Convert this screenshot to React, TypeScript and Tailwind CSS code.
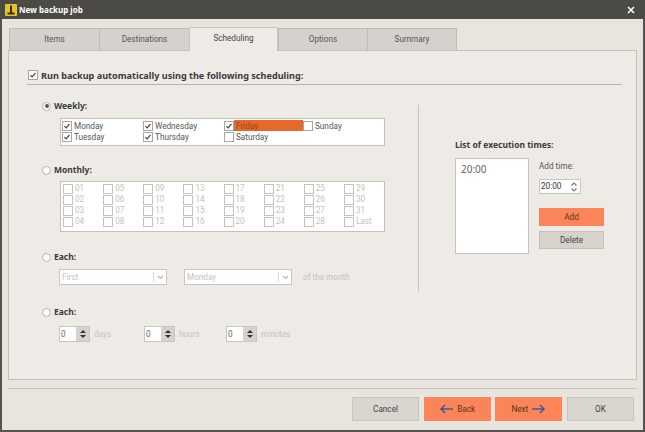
import React from "react";

const font = { fontFamily: 'Roboto, "Noto Sans", sans-serif' };

function Check({ on, off }: { on?: boolean; off?: boolean }) {
  return (
    <span className={`flex h-[10px] w-[10px] shrink-0 items-center justify-center border ${off ? "border-[#c4c2bc]" : "border-[#a8a6a0]"} bg-white`}>
      {on && (
        <svg width="8" height="8" viewBox="0 0 8 8">
          <path d="M1.4 4.2 L3.2 5.9 L6.4 2" fill="none" stroke="#4a4a4a" strokeWidth="1.2" />
        </svg>
      )}
    </span>
  );
}

function Radio({ on, label }: { on?: boolean; label: string }) {
  return (
    <div className="flex h-[12px] items-center gap-[3px]">
      <span className="flex h-[9px] w-[9px] items-center justify-center rounded-full border border-[#b4b2ac] bg-white">
        {on && <span className="h-[4px] w-[4px] rounded-full bg-[#555]" />}
      </span>
      <span className="font-['Noto_Sans'] text-[8.5px] font-bold leading-none text-[#3a3a3a]">{label}</span>
    </div>
  );
}

function Day({ name, on, hi }: { name: string; on?: boolean; hi?: boolean }) {
  return (
    <div className="flex h-[11px] items-center">
      <Check on={on} />
      <span className={`flex h-[11px] flex-1 items-center pl-[2px] pt-[1px] text-[8.2px] leading-none ${hi ? "bg-[#e8672a] text-[#9a4520]" : "text-[#555]"}`}>{name}</span>
    </div>
  );
}

function Spin({ label }: { label: string }) {
  return (
    <div className="flex items-center">
      <div className="flex h-[16px] w-[31px] items-center border border-[#c8c6c0] bg-white pl-[1px]">
        <span className="flex-1 text-[8.2px] leading-none text-[#666]">0</span>
        <span className="flex h-[14px] w-[13px] flex-col items-center justify-center gap-[2px] bg-[#d6d3cd]">
          <span className="h-0 w-0 border-x-[3px] border-b-[3px] border-x-transparent border-b-[#333]" />
          <span className="h-0 w-0 border-x-[3px] border-t-[3px] border-x-transparent border-t-[#333]" />
        </span>
      </div>
      <span className="ml-[4px] text-[8.2px] leading-none text-[#c4c2bc]">{label}</span>
    </div>
  );
}

function Select({ label }: { label: string }) {
  return (
    <div className="flex h-[16px] w-[108px] items-center border border-[#c8c6c0] bg-white pl-[2px]">
      <span className="flex-1 text-[8.2px] leading-none text-[#c4c2bc]">{label}</span>
      <span className="flex h-[10px] w-[13px] items-center justify-center border-l border-[#dddbd6]">
        <svg width="7" height="5" viewBox="0 0 7 5">
          <path d="M1 1 L3.5 3.5 L6 1" fill="none" stroke="#b8b6b0" strokeWidth="1.2" />
        </svg>
      </span>
    </div>
  );
}

function Arrow({ dir }: { dir: "l" | "r" }) {
  return (
    <svg width="15" height="10" viewBox="0 0 15 10">
      {dir === "l" ? (
        <path d="M14 5 H2 M6 1 L2 5 L6 9" fill="none" stroke="#3f5a96" strokeWidth="1.5" />
      ) : (
        <path d="M1 5 H13 M9 1 L13 5 L9 9" fill="none" stroke="#3f5a96" strokeWidth="1.5" />
      )}
    </svg>
  );
}

const tabs = [
  { t: "Items", w: "w-[90px]" },
  { t: "Destinations", w: "w-[90px]" },
  { t: "Scheduling", w: "w-[89px]" },
  { t: "Options", w: "w-[89px]" },
  { t: "Summary", w: "w-[90px]" },
];
const days = ["01", "05", "09", "13", "17", "21", "25", "29", "02", "06", "10", "14", "18", "22", "26", "30", "03", "07", "11", "15", "19", "23", "27", "31", "04", "08", "12", "16", "20", "24", "28", "Last"];

export default function App() {
  return (
    <div style={font} className="flex h-[432px] w-[645px] flex-col overflow-hidden bg-[#e8e5df]">
      <div className="flex h-[19px] shrink-0 items-center justify-between bg-[#4c4a44] pl-[5px] pr-[10px]">
        <div className="flex items-center gap-[2px]">
          <span className="flex h-[12px] w-[12px] items-center justify-center rounded-[1px] bg-[#e6c422]">
            <svg width="10" height="10" viewBox="0 0 10 10">
              <path d="M5 0.5 V8 M1.5 8.5 H8.5" stroke="#3a2a08" strokeWidth="2" fill="none" />
            </svg>
          </span>
          <span className="font-['Noto_Sans'] text-[8px] font-bold leading-none text-white">New backup job</span>
        </div>
        <svg width="8" height="8" viewBox="0 0 8 8">
          <path d="M1 1 L7 7 M7 1 L1 7" stroke="#fff" strokeWidth="1.6" />
        </svg>
      </div>

      <div className="flex min-h-0 flex-1 flex-col border-x-2 border-b-2 border-[#55534d] px-[6px]">
        <div className="mt-[9px] flex h-[22px] shrink-0 items-end pl-[1px]">
          {tabs.map(({ t, w }) =>
            t === "Scheduling" ? (
              <div key={t} className={`relative z-10 -mb-px flex h-[24px] ${w} items-center justify-center border-x border-t border-[#c8c5bf] bg-[#eeebe6] pb-[3px] text-[8.2px] text-[#444]`}>
                {t}
              </div>
            ) : (
              <div key={t} className={`flex h-[22px] ${w} items-center justify-center border-l border-t border-[#bfbcb6] bg-[#d5d2cd] text-[8.2px] text-[#555] last:border-r`}>
                {t}
              </div>
            )
          )}
        </div>

        <div className="flex h-[330px] shrink-0 flex-col border border-[#c4c1bb] bg-[#eeebe6] pl-[18px] pr-[14px] pt-[19px]">
          <div className="flex h-[15px] items-start gap-[3px] border-b border-[#b8b5af] pl-[1px]">
            <Check on />
            <span className="font-['Noto_Sans'] text-[9.1px] font-bold leading-[11px] text-[#3a3a3a]">Run backup automatically using the following scheduling:</span>
          </div>

          <div className="flex flex-1">
            <div className="w-[391px] shrink-0 pl-[15px] pt-[15px]">
              <Radio on label="Weekly:" />
              <div className="ml-[18px] mt-[6px] grid h-[28px] w-[325px] grid-cols-[81px_81px_79px_80px] content-start border border-[#c4c1bb] bg-white pl-[1px] pt-[1px]">
                <Day name="Monday" on />
                <Day name="Wednesday" on />
                <Day name="Friday" on hi />
                <Day name="Sunday" />
                <Day name="Tuesday" on />
                <Day name="Thursday" on />
                <Day name="Saturday" />
              </div>

              <div className="mt-[18px]">
                <Radio label="Monthly:" />
              </div>
              <div className="ml-[18px] mt-[5px] grid h-[51px] w-[325px] grid-cols-8 content-start border border-[#c4c1bb] bg-white pl-[2px] pt-[1px]">
                {days.map((d) => (
                  <div key={d} className="flex h-[11px] items-center gap-[2px]">
                    <Check off />
                    <span className="text-[8.2px] leading-none text-[#c4c2bc]">{d}</span>
                  </div>
                ))}
              </div>

              <div className="mt-[19px]">
                <Radio label="Each:" />
              </div>
              <div className="ml-[17px] mt-[6px] flex items-center">
                <Select label="First" />
                <span className="ml-[17px]" />
                <Select label="Monday" />
                <span className="ml-[11px] text-[8.2px] leading-none text-[#c4c2bc]">of the month</span>
              </div>

              <div className="mt-[21px]">
                <Radio label="Each:" />
              </div>
              <div className="ml-[17px] mt-[8px] flex items-center">
                <div className="w-[85px]"><Spin label="days" /></div>
                <div className="w-[82px]"><Spin label="hours" /></div>
                <Spin label="minutes" />
              </div>
            </div>

            <div className="mt-[20px] h-[187px] w-px shrink-0 bg-[#c8c5bf]" />

            <div className="pl-[36px] pt-[54px]">
              <div className="font-['Noto_Sans'] text-[8.5px] font-bold leading-[11px] text-[#3a3a3a]">List of execution times:</div>
              <div className="mt-[8px] flex">
                <div className="h-[96px] w-[74px] border border-[#c8c5bf] bg-white pl-[5px] pt-[3px] font-['Noto_Sans'] text-[10px] leading-[14px] text-[#666]">20:00</div>
                <div className="ml-[10px] flex w-[65px] flex-col">
                  <div className="mt-[3px] text-[8.2px] leading-[11px] text-[#555]">Add time:</div>
                  <div className="mt-[7px] flex h-[15px] w-[42px] items-center border border-[#c8c5bf] bg-white pl-[1px] text-[8.2px] leading-none text-[#333]">
                    <span className="flex-1">20:00</span>
                    <svg width="10" height="12" viewBox="0 0 10 12" className="mr-[1px]">
                      <path d="M2.5 4.5 L5 2 L7.5 4.5 M2.5 7.5 L5 10 L7.5 7.5" fill="none" stroke="#777" strokeWidth="1.1" />
                    </svg>
                  </div>
                  <div className="mt-[14px] flex h-[18px] items-center justify-center bg-[#fb8558] text-[8.2px] text-[#5a3324]">Add</div>
                  <div className="mt-[5px] flex h-[18px] items-center justify-center border border-[#c4c1bb] bg-[#d7d2cc] text-[8.2px] text-[#444]">Delete</div>
                </div>
              </div>
            </div>
          </div>
        </div>

        <div className="mt-[8px] h-px shrink-0 bg-[#c4c1bb]" />

        <div className="mt-[8px] flex shrink-0 justify-end gap-[4.67px] pr-[3px]">
          <div className="flex h-[24px] w-[67px] items-center justify-center border border-[#c8c5bf] bg-[#d9d5cf] text-[8.2px] text-[#444]">Cancel</div>
          <div className="flex h-[24px] w-[67px] items-center justify-center gap-[3px] bg-[#fb8558] text-[8.2px] text-[#5a3324]"><Arrow dir="l" />Back</div>
          <div className="flex h-[24px] w-[67px] items-center justify-center gap-[3px] bg-[#fb8558] text-[8.2px] text-[#5a3324]">Next<Arrow dir="r" /></div>
          <div className="flex h-[24px] w-[67px] items-center justify-center border border-[#c8c5bf] bg-[#d9d5cf] text-[8.2px] text-[#444]">OK</div>
        </div>
      </div>
    </div>
  );
}
